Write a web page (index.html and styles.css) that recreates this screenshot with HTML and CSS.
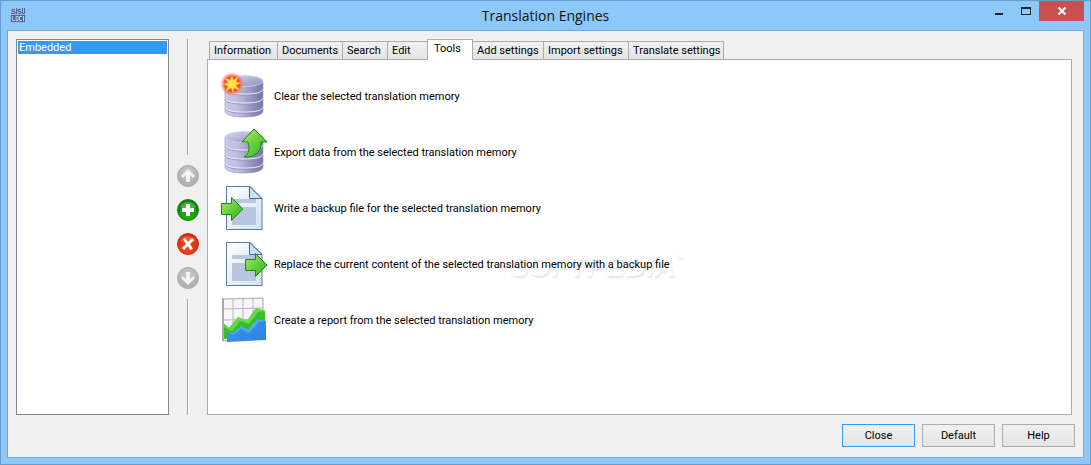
FILE: index.html
```html
<!DOCTYPE html>
<html lang="en">
<head>
    <meta charset="UTF-8">
    <title>Translation Engines</title>
    <link rel="stylesheet" href="styles.css">
</head>
<body>
    <!-- shared gradients and shapes -->
    <svg class="defs" width="0" height="0" aria-hidden="true">
        <defs>
            <linearGradient id="dbBody"><stop offset="0" stop-color="#c9c9e9"/><stop offset=".3" stop-color="#c0c0e4"/><stop offset="1" stop-color="#7475a8"/></linearGradient>
            <linearGradient id="dbTop" x1="0" y1="0" x2="1" y2="1"><stop offset="0" stop-color="#d9d9f3"/><stop offset="1" stop-color="#8b8cb9"/></linearGradient>
            <linearGradient id="green" x1="0" y1="0" x2="1" y2="1"><stop offset="0" stop-color="#a4ef6a"/><stop offset="1" stop-color="#2dae12"/></linearGradient>
            <linearGradient id="paper" x1="0" y1="0" x2="1" y2="1"><stop offset="0" stop-color="#ffffff"/><stop offset="1" stop-color="#d3e0f2"/></linearGradient>
            <linearGradient id="blue" x1="0" y1="0" x2="1" y2="1"><stop offset="0" stop-color="#3d94ea"/><stop offset="1" stop-color="#2d83e2"/></linearGradient>
            <radialGradient id="glow"><stop offset="0" stop-color="#ff3a1c"/><stop offset=".6" stop-color="#f8402c"/><stop offset="1" stop-color="#ff8070" stop-opacity="0"/></radialGradient>
            <radialGradient id="ballGrey" cx=".5" cy=".3"><stop offset="0" stop-color="#cbcbcb"/><stop offset="1" stop-color="#b2b2b2"/></radialGradient>
            <radialGradient id="ballGreen" cx=".5" cy=".8" r=".8"><stop offset="0" stop-color="#27b50e"/><stop offset="1" stop-color="#0b7a08"/></radialGradient>
            <radialGradient id="ballRed" cx=".45" cy=".7" r=".7"><stop offset="0" stop-color="#ff4a24"/><stop offset="1" stop-color="#d72104"/></radialGradient>
            <g id="database">
                <path d="M5 9v30c0 4 8 6 19 6s19-2 19-6V9z" fill="url(#dbBody)" stroke="#9a9bc4" stroke-width=".6"/>
                <ellipse cx="24" cy="9" rx="19" ry="5.5" fill="url(#dbTop)" stroke="#d5d5ec" stroke-width=".8"/>
                <path d="M5 18c1 4 9 5 19 5s18-1 19-5M5 27c1 4 9 5 19 5s18-1 19-5M5 36c1 4 9 5 19 5s18-1 19-5" fill="none" stroke="#8586b2" stroke-width=".7"/>
                <path d="M5 17c1 4 9 5 19 5s18-1 19-5M5 26c1 4 9 5 19 5s18-1 19-5M5 35c1 4 9 5 19 5s18-1 19-5" fill="none" stroke="#ececf9"/>
            </g>
            <g id="document">
                <path d="M6.500 2.500H30l12 12v31H6.500z" fill="url(#paper)" stroke="#5f789d"/>
                <path d="M12 15h24v4H12zM12 23h24v18H12z" fill="#b9c6df"/>
                <path d="M29.500 2.500v12h12.500z" fill="#c5e5f8" stroke="#466a98"/>
            </g>
        </defs>
    </svg>

    <div class="window">
        <header class="titlebar">
            <svg class="app-icon" width="14" height="14" viewBox="0 0 14 14">
                <path fill="#a9bbd6" d="M0 0h14v7H0z"/><path fill="#4a659a" d="M0 7h14v7H0z"/>
                <path stroke="#4a6596" fill="none" d="M4 1.500H1v2h3v2H0M5.500 0v6M10 1.500H7v2h3v2H7M11.500 0v5.500h2V0"/>
                <path stroke="#c3d0e4" fill="none" d="M1.500 8v4.500H4M5 8.500h2v4H5zM11 8.500H8.500v4H11M12.500 8v5"/>
            </svg>
            <h1>Translation Engines</h1>
            <div class="window-controls">
                <button class="control" aria-label="Minimize"><svg width="12" height="12"><path d="M2 8h8v2H2z" fill="#222"/></svg></button>
                <button class="control" aria-label="Maximize"><svg width="12" height="12"><path d="M1 2h10v8H1zM2 4v5h8V4z" fill="#222" fill-rule="evenodd"/></svg></button>
                <button class="control control-close" aria-label="Close window"><svg width="12" height="12"><path d="M2.500 2.500l7 7m0-7l-7 7" stroke="#fff" stroke-width="2"/></svg></button>
            </div>
        </header>

        <main class="client">
            <div class="workspace">
                <ul class="memories">
                    <li class="selected">Embedded</li>
                </ul>

                <div class="order">
                    <span class="line"></span>
                    <div class="order-buttons">
                        <button class="ball" aria-label="Move up"><svg width="22" height="22"><circle cx="11" cy="11" r="10.500" fill="url(#ballGrey)" stroke="#a8a8a8"/><path d="M11 4l7 7-2 2-3-3v7H9v-7l-3 3-2-2z" fill="#f3f3f3"/></svg></button>
                        <button class="ball" aria-label="Add"><svg width="22" height="22"><circle cx="11" cy="11" r="10.500" fill="url(#ballGreen)" stroke="#187f13"/><path d="M3 8a9 9 0 0 1 16 0q-8 4-16 0" fill="#fff" opacity=".25"/><path d="M9 5h4v4h4v4h-4v4H9v-4H5V9h4z" fill="#fff"/></svg></button>
                        <button class="ball" aria-label="Remove"><svg width="22" height="22"><circle cx="11" cy="11" r="10.500" fill="url(#ballRed)" stroke="#c73014"/><path d="M3 8a9 9 0 0 1 16 0q-8 4-16 0" fill="#fff" opacity=".2"/><path d="M6 6l2-1 3 4 4-4 2 2-4 4 3 5-3 1-2-4-4 4-2-2 4-4z" fill="#fff"/></svg></button>
                        <button class="ball" aria-label="Move down"><svg width="22" height="22"><circle cx="11" cy="11" r="10.500" fill="url(#ballGrey)" stroke="#a8a8a8"/><path d="M11 18l7-7-2-2-3 3V5H9v7L6 9l-2 2z" fill="#f3f3f3"/></svg></button>
                    </div>
                    <span class="line"></span>
                </div>

                <section class="tabbed">
                    <nav class="tabs" role="tablist">
                        <button class="tab" role="tab">Information</button>
                        <button class="tab" role="tab">Documents</button>
                        <button class="tab" role="tab">Search</button>
                        <button class="tab" role="tab">Edit</button>
                        <button class="tab active" role="tab" aria-selected="true">Tools</button>
                        <button class="tab" role="tab">Add settings</button>
                        <button class="tab" role="tab">Import settings</button>
                        <button class="tab" role="tab">Translate settings</button>
                    </nav>
                    <div class="panel" role="tabpanel">
                        <span class="watermark" aria-hidden="true">SOFTPEDIA<sup>°</sup></span>
                        <button class="tool">
                            <svg width="48" height="48"><use href="#database"/><circle cx="12" cy="12" r="12" fill="url(#glow)"/><path d="M12 3l1.500 5L18 5l-2 5 5 1-5 2 3 5-5-2-1 5-2-5-5 3 2-5-5-2 5-1-3-5 5 2z" fill="#ffe24a" stroke="#ffb321" stroke-width=".6"/></svg>
                            <span>Clear the selected translation memory</span>
                        </button>
                        <button class="tool">
                            <svg width="48" height="48"><use href="#database"/><path d="M34 1l13 13h-6c1 9-6 16-17 15 5-3 6-8 4-15h-6z" fill="url(#green)" stroke="#138b13"/></svg>
                            <span>Export data from the selected translation memory</span>
                        </button>
                        <button class="tool">
                            <svg width="48" height="48"><use href="#document"/><path d="M1.500 19.500h10v-6L23 25 11.500 36.500v-6h-10z" fill="url(#green)" stroke="#168b13"/></svg>
                            <span>Write a backup file for the selected translation memory</span>
                        </button>
                        <button class="tool">
                            <svg width="48" height="48"><use href="#document"/><path d="M25.500 19.500h10v-6L47 25 35.500 36.500v-6h-10z" fill="url(#green)" stroke="#168b13"/></svg>
                            <span>Replace the current content of the selected translation memory with a backup file</span>
                        </button>
                        <button class="tool">
                            <svg width="48" height="48">
                                <path d="M3 3l40-1v40L3 45z" fill="#f6f6fa" stroke="#a5a6af"/>
                                <path d="M13 3v41M23 3v41M33 3v40M3 13l40-1M3 24l40-1M3 34l40-1" stroke="#b5b6c0" fill="none"/>
                                <path d="M3 2v43" stroke="#84858f"/>
                                <path d="M4 28l5 4 9-11 9 4 9-13 9 3v13L28 41 4 43z" fill="#35bf25"/>
                                <path d="M4 28l5 4 9-11 9 4 9-13 9 3-7 1-9 12-9-3-8 10-7-3z" fill="#62db49"/>
                                <path d="M7 36l6 1 8-7 7 4 9-11 9 2v19L7 46z" fill="url(#blue)"/>
                                <path d="M7 36l6 1 8-7 7 4 9-11 9 2-7 1-10 11-8-4-7 6z" fill="#55a8f2"/>
                            </svg>
                            <span>Create a report from the selected translation memory</span>
                        </button>
                    </div>
                </section>
            </div>

            <footer class="actions">
                <button class="btn primary">Close</button>
                <button class="btn">Default</button>
                <button class="btn">Help</button>
            </footer>
        </main>
    </div>
</body>
</html>
```

FILE: styles.css
```css
* { box-sizing: border-box; }
body { margin: 0; font-family: Roboto, sans-serif; font-size: 11px; color: #000; }
button { font: inherit; color: inherit; margin: 0; padding: 0; border: none; background: none; }
svg { display: block; }
.defs { position: absolute; }

.window { display: flex; flex-direction: column; min-height: 100vh; padding: 0 6px 6px; background: #8dc8fa; border: 1px solid #6c9bc8; }

.titlebar { display: grid; grid-template-columns: 1fr auto 1fr; height: 29px; }
.titlebar h1 { margin: 0; font: 14px/29px "Open Sans", sans-serif; color: #111; }
.app-icon { margin: 7px 0 0 4px; }
.window-controls { display: flex; justify-content: flex-end; align-items: flex-start; }
.control { display: flex; align-items: center; justify-content: center; width: 27px; height: 20px; }
.control-close { width: 45px; background: #c75050; }

.client { flex: 1; display: flex; flex-direction: column; background: #f0f0f0; border: 1px solid #75a9d8; padding: 8px 8px 10px; }
.workspace { flex: 1; display: flex; }

.memories { width: 153px; margin: 0; padding: 1px; list-style: none; background: #fff; border: 1px solid #828790; }
.memories li { height: 13px; padding-left: 1px; line-height: 13px; }
.memories .selected { background: #3399ff; color: #fff; }

.order { display: flex; flex-direction: column; align-items: center; width: 38px; }
.line { flex: 1; width: 2px; background: #a0a0a0; border-right: 1px solid #fff; }
.order-buttons { display: flex; flex-direction: column; gap: 12px; padding: 10px 0; }

.tabbed { flex: 1; display: flex; flex-direction: column; margin-right: 3px; }
.tabs { display: grid; grid-template-columns: 68px 65px 45px 40px 45px 71px 85px 95px; align-items: end; height: 21px; padding-left: 2px; margin-bottom: -1px; }
.tab { height: 19px; padding-left: 4px; text-align: left; white-space: nowrap; border: 1px solid #acacac; margin-right: -1px; background: linear-gradient(#f0f0f0, #e5e5e5); }
.tab.active { z-index: 1; height: 21px; padding: 0 0 2px 6px; background: #fff; border-bottom-color: #fff; }

.panel { position: relative; flex: 1; display: flex; flex-direction: column; align-items: flex-start; padding: 8px 12px; background: #fff; border: 1px solid #acacac; }
.tool { position: relative; display: flex; align-items: center; gap: 6px; height: 56px; }
.watermark { position: absolute; left: 301px; top: 186px; font: italic bold 29px/40px "Liberation Sans", sans-serif; color: #fff; text-shadow: 1px 2px 2px #e6e6e6; }
.watermark sup { font-size: 18px; line-height: 0; }

.actions { display: flex; justify-content: flex-end; gap: 7px; padding-top: 9px; }
.btn { width: 73px; height: 23px; border: 1px solid #acacac; background: linear-gradient(#f0f0f0, #e5e5e5); }
.btn.primary { border-color: #3399ff; }
```
